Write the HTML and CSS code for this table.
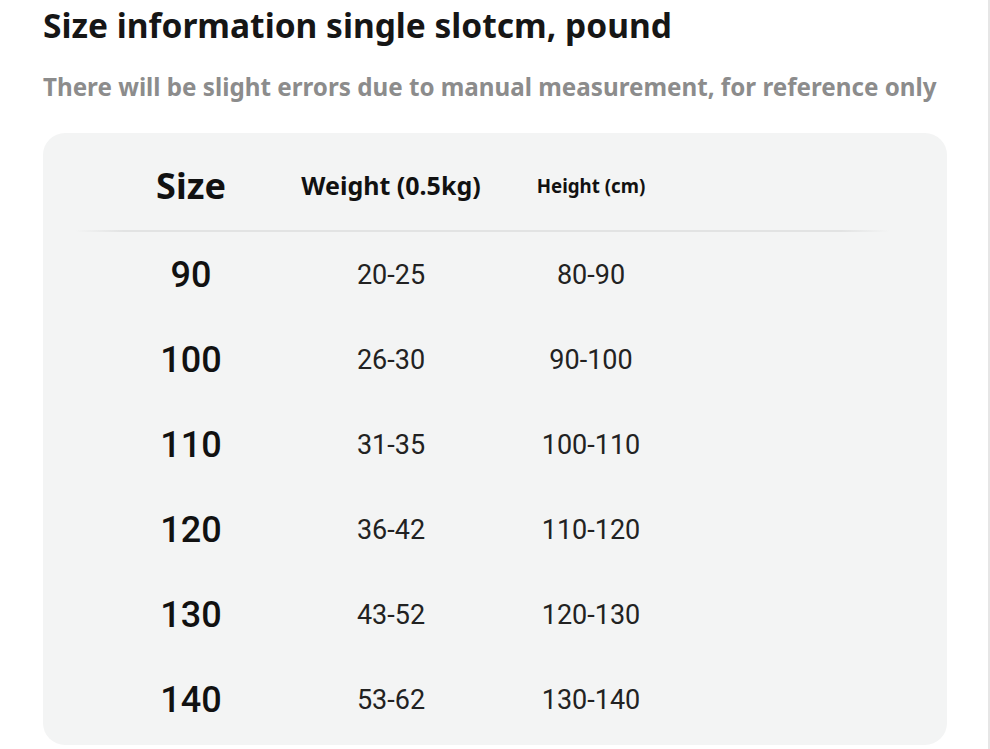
FILE: index.html
```html
<!DOCTYPE html>
<html>
<head>
<meta charset="utf-8">
<link rel="stylesheet" href="styles.css">
</head>
<body>
<div class="page">
  <h1 class="title">Size information single slotcm, pound</h1>
  <p class="subtitle">There will be slight errors due to manual measurement, for reference only</p>
  <div class="card">
    <div class="row head">
      <div class="c size-h">Size</div>
      <div class="c weight-h">Weight (0.5kg)</div>
      <div class="c height-h">Height (cm)</div>
    </div>
    <div class="divider"></div>
    <div class="row data"><div class="c sz">90</div><div class="c v">20-25</div><div class="c v">80-90</div></div>
    <div class="row data"><div class="c sz">100</div><div class="c v">26-30</div><div class="c v">90-100</div></div>
    <div class="row data"><div class="c sz">110</div><div class="c v">31-35</div><div class="c v">100-110</div></div>
    <div class="row data"><div class="c sz">120</div><div class="c v">36-42</div><div class="c v">110-120</div></div>
    <div class="row data"><div class="c sz">130</div><div class="c v">43-52</div><div class="c v">120-130</div></div>
    <div class="row data"><div class="c sz">140</div><div class="c v">53-62</div><div class="c v">130-140</div></div>
  </div>
</div>
</body>
</html>
```
FILE: styles.css
```css
html, body {
  margin: 0;
  padding: 0;
  background: #ffffff;
}
.page {
  width: 990px;
  height: 749px;
  box-sizing: border-box;
  padding: 0 0 0 43px;
  border-right: 2px solid #e6e6e6;
  overflow: hidden;
}
.title {
  margin: 0;
  padding-top: 3px;
  font-family: "Noto Sans", sans-serif;
  font-weight: 700;
  font-size: 33.5px;
  line-height: 44px;
  color: #161616;
}
.subtitle {
  margin: 25px 0 0 0;
  font-family: "Noto Sans", sans-serif;
  font-weight: 700;
  font-size: 24.2px;
  line-height: 30px;
  color: #8c8c8c;
}
.card {
  margin-top: 31px;
  width: 904px;
  height: 612px;
  background: #f3f4f4;
  border-radius: 22px;
}
.row {
  display: grid;
  grid-template-columns: 200px 200px 200px;
  padding-left: 48px;
  align-items: center;
}
.c {
  text-align: center;
}
.head {
  height: 98px;
  box-sizing: border-box;
  padding-top: 6px;
  font-family: "Noto Sans", sans-serif;
  font-weight: 700;
  color: #111;
}
.size-h { font-size: 36px; }
.weight-h { font-size: 25px; }
.height-h { font-size: 18.7px; }
.divider {
  height: 2px;
  margin: -1px 57px 0 32px;
  background: linear-gradient(to right, rgba(225,226,226,0), #e2e3e3 6%, #e2e3e3 94%, rgba(225,226,226,0));
}
.data {
  height: 85px;
  font-family: Roboto, sans-serif;
  color: #222;
}
.sz {
  font-size: 36px;
  font-weight: 500;
  color: #111;
}
.v {
  font-size: 27px;
  font-weight: 400;
}
```
